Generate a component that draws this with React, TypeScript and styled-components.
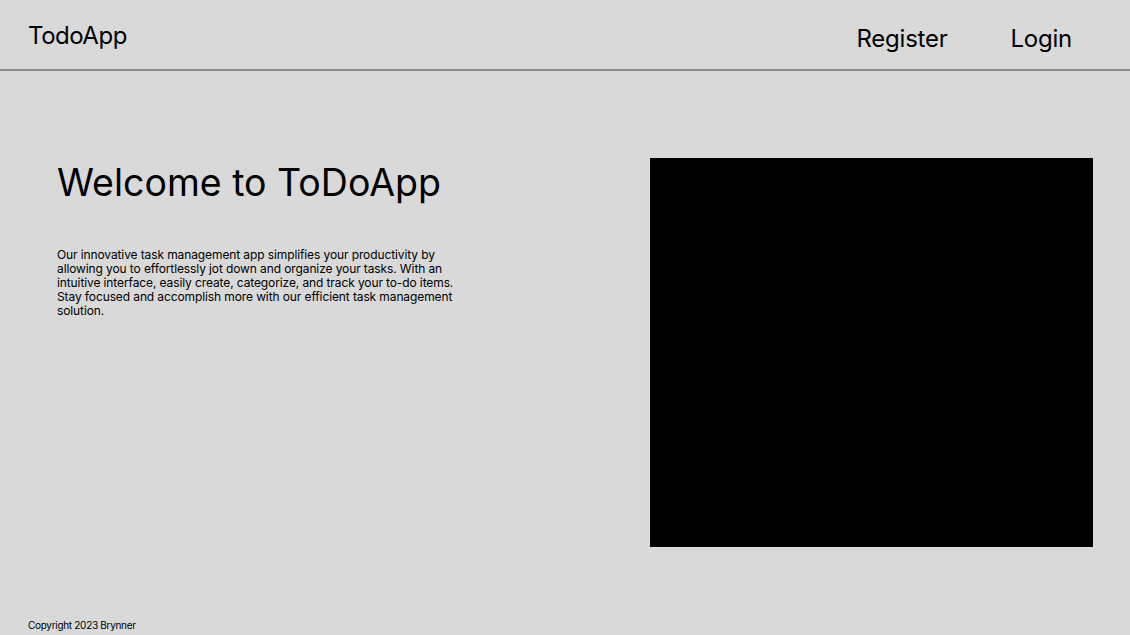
import React from "react";
import styled, { createGlobalStyle } from "styled-components";

const GlobalStyle = createGlobalStyle`
  html, body {
    margin: 0;
    padding: 0;
    background: #d9d9d9;
    font-family: Inter, "Noto Sans", sans-serif;
    color: #000;
  }
  * { box-sizing: border-box; }
`;

const Page = styled.div`
  width: 1130px;
  height: 635px;
  display: flex;
  flex-direction: column;
  background: #d9d9d9;
  overflow: hidden;
`;

const Header = styled.header`
  height: 71px;
  display: flex;
  align-items: flex-start;
  justify-content: space-between;
  border-bottom: 2px solid #8c8c8c;
  padding: 0 58px 0 28px;
`;

const Brand = styled.div`
  font-size: 24px;
  line-height: 1;
  letter-spacing: -0.02em;
  margin-top: 24px;
`;

const Nav = styled.nav`
  display: flex;
  gap: 63px;
  margin-top: 27px;
`;

const NavLink = styled.a`
  font-size: 24px;
  line-height: 1;
  letter-spacing: -0.01em;
  color: #000;
  text-decoration: none;
  cursor: pointer;
`;

const Main = styled.main`
  flex: 1;
  display: flex;
  justify-content: space-between;
  padding: 87px 37px 0 57px;
`;

const Intro = styled.section`
  width: 400px;
  display: flex;
  flex-direction: column;
`;

const Title = styled.h1`
  margin: 6px 0 0;
  height: 40px;
  font-size: 37.5px;
  font-weight: 400;
  line-height: 1;
  white-space: nowrap;
`;

const Text = styled.p`
  margin: 44px 0 0;
  font-size: 12px;
  line-height: 14px;
  letter-spacing: -0.009em;
`;

const Media = styled.div`
  width: 443px;
  height: 389px;
  background: #000;
`;

const Footer = styled.footer`
  padding: 0 0 4px 28px;
  font-size: 10px;
  line-height: 12px;
  letter-spacing: -0.03em;
`;

export default function App() {
  return (
    <Page>
      <GlobalStyle />
      <Header>
        <Brand>TodoApp</Brand>
        <Nav>
          <NavLink>Register</NavLink>
          <NavLink>Login</NavLink>
        </Nav>
      </Header>
      <Main>
        <Intro>
          <Title>Welcome to ToDoApp</Title>
          <Text>
            Our innovative task management app simplifies your productivity by
            allowing you to effortlessly jot down and organize your tasks. With an
            intuitive interface, easily create, categorize, and track your to-do items.
            Stay focused and accomplish more with our efficient task management
            solution.
          </Text>
        </Intro>
        <Media />
      </Main>
      <Footer>Copyright 2023 Brynner</Footer>
    </Page>
  );
}
